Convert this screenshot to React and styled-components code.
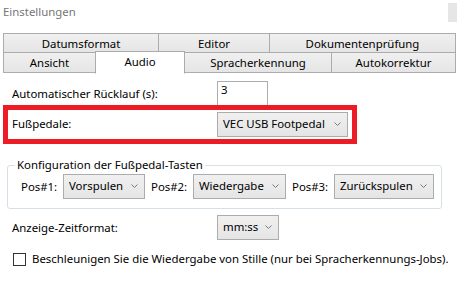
import styled, { createGlobalStyle } from "styled-components";

const GlobalStyle = createGlobalStyle`
  html, body {
    margin: 0;
    padding: 0;
    background: #fff;
  }
  body {
    font-family: "Noto Sans", "Segoe UI", sans-serif;
    font-size: 11.4px;
    color: #000;
  }
`;

const Window = styled.div`
  width: 457px;
  height: 293px;
  overflow: hidden;
  background: #fff;
  display: flex;
  flex-direction: column;
`;

const TitleBar = styled.div`
  height: 33px;
  display: flex;
  justify-content: space-between;
  align-items: flex-start;
`;

const Title = styled.span`
  padding: 4px 0 0 3px;
  color: #767676;
  line-height: 16px;
`;

const CloseBox = styled.div`
  width: 9px;
  height: 19px;
  margin-top: 3px;
  background: #e6e6e6;
`;

const TabRow = styled.div`
  display: flex;
  padding-left: 3px;
  margin-top: ${(p) => (p.$back ? 0 : -1)}px;
`;

const Tab = styled.div`
  box-sizing: border-box;
  flex: none;
  width: ${(p) => p.$w}px;
  height: ${(p) => (p.$active ? 23 : p.$back ? 20 : 21)}px;
  margin-left: -1px;
  margin-top: ${(p) => (p.$active ? -1 : 0)}px;
  margin-bottom: ${(p) => (p.$active ? -1 : 0)}px;
  padding-bottom: ${(p) => (p.$active ? 3 : 0)}px;
  border: 1px solid #acacac;
  border-bottom-color: ${(p) => (p.$active ? "#fff" : "#acacac")};
  background: ${(p) =>
    p.$active ? "#fff" : "linear-gradient(#f0f0f0, #e5e5e5)"};
  position: relative;
  z-index: ${(p) => (p.$active ? 1 : 0)};
  display: flex;
  align-items: center;
  justify-content: center;
  white-space: nowrap;

  &:first-child {
    margin-left: 0;
  }
`;

const Content = styled.div`
  display: flex;
  flex-direction: column;
`;

const FieldRow = styled.div`
  display: flex;
  align-items: center;
  padding-left: 12px;
  margin-top: ${(p) => p.$top || 0}px;
`;

const Label = styled.div`
  width: 205px;
  flex: none;
  line-height: 16px;
`;

const TextBox = styled.div`
  box-sizing: border-box;
  width: 51px;
  height: 26px;
  border: 1px solid #abadb3;
  padding: 0 3px;
  line-height: 16px;
  background: #fff;
`;

const Highlight = styled.div`
  box-sizing: border-box;
  width: 354px;
  height: 39px;
  margin: -2px 0 0 3px;
  border: 5px solid #ed1c24;
  padding: 0 0 1px 4px;
  display: flex;
  align-items: center;
  position: relative;
`;

const SelectBox = styled.div`
  box-sizing: border-box;
  flex: none;
  width: ${(p) => p.$w}px;
  height: 25px;
  border: 1px solid #acacac;
  background: linear-gradient(#f0f0f0, #e5e5e5);
  display: flex;
  align-items: center;
  justify-content: space-between;
  padding: 0 6px 2px 5px;
  white-space: nowrap;
`;

const Chevron = styled.svg`
  flex: none;
  margin-top: 1px;
`;

const Group = styled.fieldset`
  box-sizing: border-box;
  width: 432px;
  margin: 13px 0 0 7px;
  padding: 1px 7px 9px 7px;
  border: 1px solid #d5dfe5;
  border-radius: 3px;
`;

const Legend = styled.legend`
  padding: 0 2px;
  line-height: 16px;
`;

const PosRow = styled.div`
  display: flex;
  align-items: center;
`;

const PosLabel = styled.div`
  box-sizing: border-box;
  width: 48px;
  flex: none;
  padding-left: 6px;
`;

const CheckRow = styled.div`
  display: flex;
  align-items: center;
  padding-left: 13px;
  margin-top: 11px;
  line-height: 16px;
`;

const CheckBox = styled.div`
  box-sizing: border-box;
  width: 13px;
  height: 13px;
  border: 1px solid #333;
  background: #fff;
  margin-right: 6px;
  flex: none;
`;

function Select({ w, children }) {
  return (
    <SelectBox $w={w}>
      <span>{children}</span>
      <Chevron width="7" height="4" viewBox="0 0 7 4">
        <polyline points="0.5,0.5 3.5,3.5 6.5,0.5" fill="none" stroke="#7a7a7a" strokeWidth="1" />
      </Chevron>
    </SelectBox>
  );
}

const backTabs = [
  ["Datumsformat", 156],
  ["Editor", 112],
  ["Dokumentenprüfung", 187],
];

const frontTabs = [
  ["Ansicht", 93],
  ["Audio", 90],
  ["Spracherkennung", 148],
  ["Autokorrektur", 125],
];

const positions = [
  ["Pos#1:", "Vorspulen", 82],
  ["Pos#2:", "Wiedergabe", 93],
  ["Pos#3:", "Zurückspulen", 100],
];

export default function App() {
  return (
    <Window>
      <GlobalStyle />
      <TitleBar>
        <Title>Einstellungen</Title>
        <CloseBox />
      </TitleBar>
      <TabRow $back>
        {backTabs.map(([t, w]) => (
          <Tab key={t} $w={w} $back>
            {t}
          </Tab>
        ))}
      </TabRow>
      <TabRow>
        {frontTabs.map(([t, w]) => (
          <Tab key={t} $w={w} $active={t === "Audio"}>
            {t}
          </Tab>
        ))}
      </TabRow>
      <Content>
        <FieldRow $top={8}>
          <Label>Automatischer Rücklauf (s):</Label>
          <TextBox>3</TextBox>
        </FieldRow>
        <Highlight>
          <Label>Fußpedale:</Label>
          <Select w={131}>VEC USB Footpedal</Select>
        </Highlight>
        <Group>
          <Legend>Konfiguration der Fußpedal-Tasten</Legend>
          <PosRow>
            {positions.map(([l, v, w]) => (
              <PosRow key={l}>
                <PosLabel>{l}</PosLabel>
                <Select w={w}>{v}</Select>
              </PosRow>
            ))}
          </PosRow>
        </Group>
        <FieldRow $top={6}>
          <Label>Anzeige-Zeitformat:</Label>
          <Select w={62}>mm:ss</Select>
        </FieldRow>
        <CheckRow>
          <CheckBox />
          <span>Beschleunigen Sie die Wiedergabe von Stille (nur bei Spracherkennungs-Jobs).</span>
        </CheckRow>
      </Content>
    </Window>
  );
}
